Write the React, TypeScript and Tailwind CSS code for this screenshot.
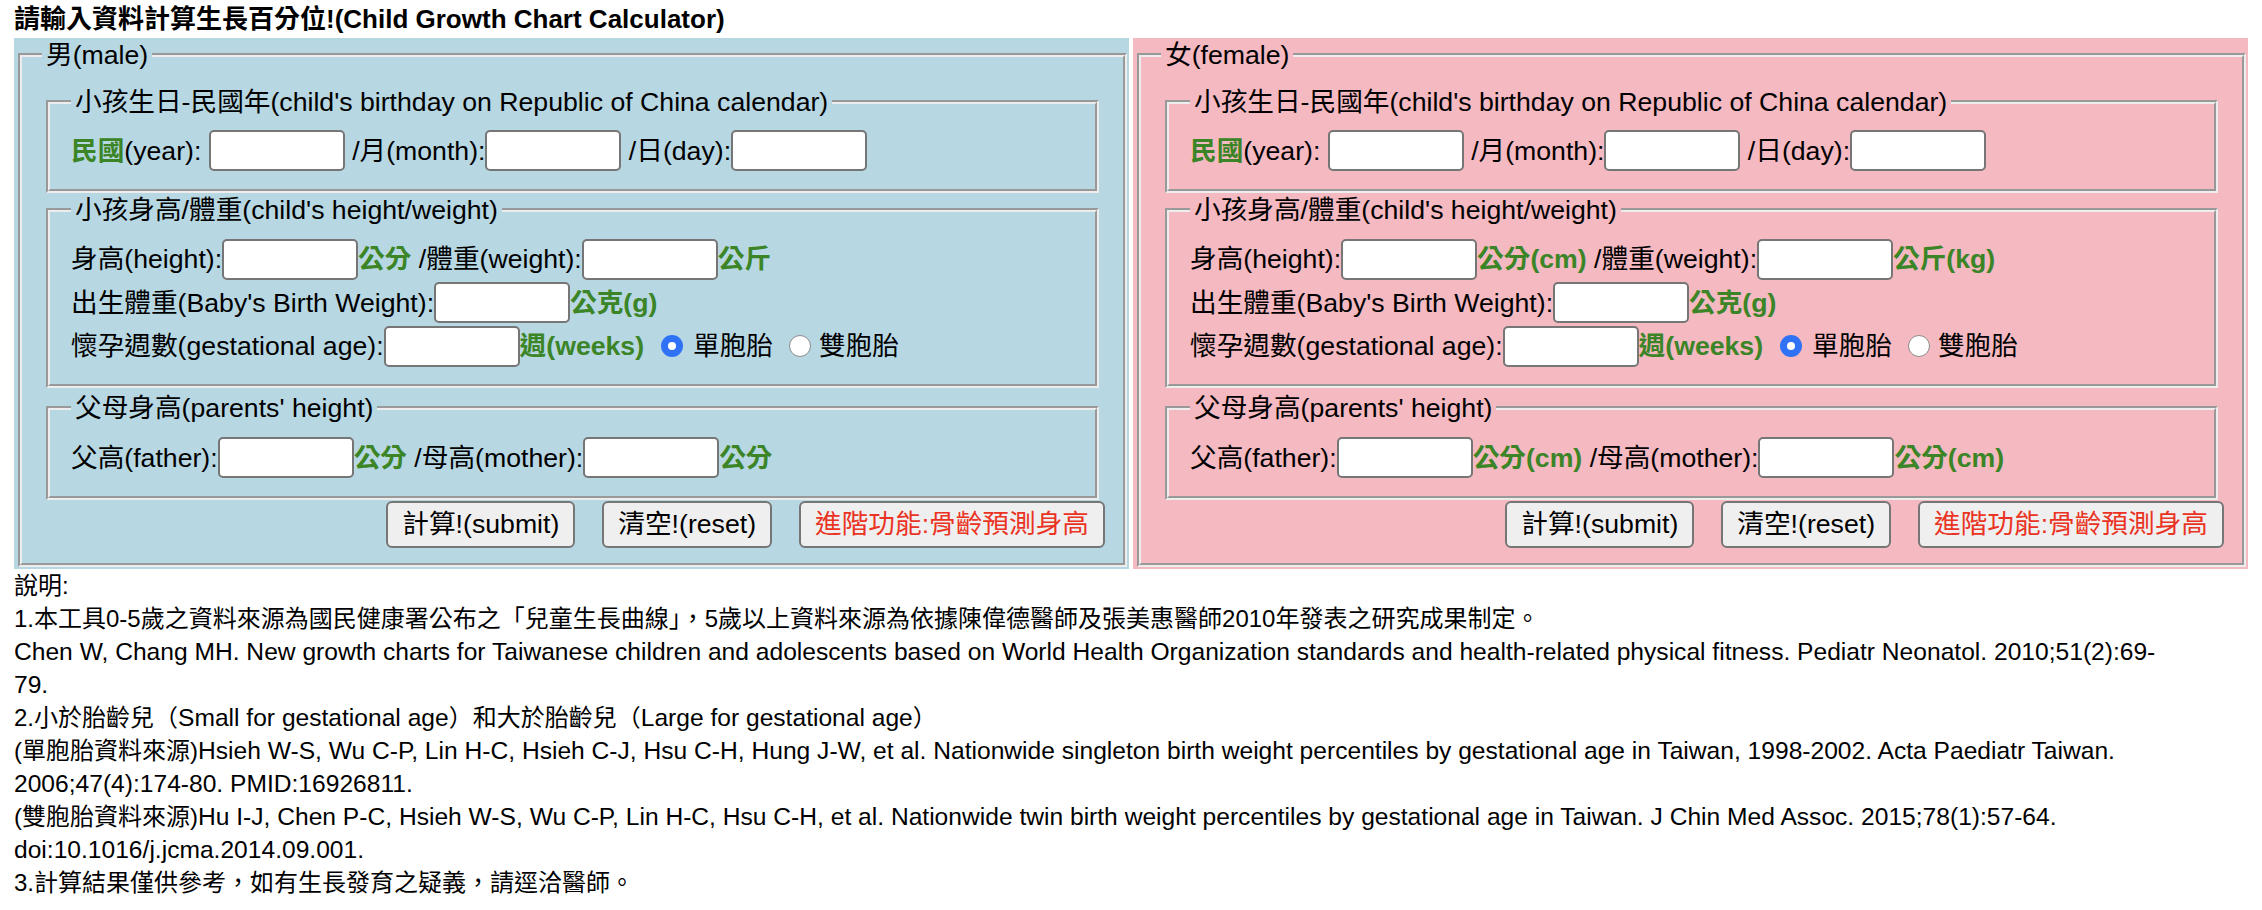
import React from "react";

const Input = () => (
  <span className="inline-block w-[136px] h-[41px] border-2 border-[#767676] rounded-[5px] bg-white shrink-0" />
);

const Unit = ({ children }: { children: React.ReactNode }) => (
  <span className="font-bold text-[#3b8527]">{children}</span>
);

const Row = ({ children }: { children: React.ReactNode }) => (
  <div className="flex items-center h-[43.5px] whitespace-pre">{children}</div>
);

const RadioOn = () => (
  <span className="flex items-center justify-center w-[22px] h-[22px] rounded-full bg-[#2f72f6] ml-[17px] mr-[10px] shrink-0">
    <span className="block w-[8px] h-[8px] rounded-full bg-white" />
  </span>
);

const RadioOff = () => (
  <span className="block w-[22px] h-[22px] rounded-full bg-white border-[1.5px] border-[#8c8c8c] ml-[16px] mr-[8px] shrink-0" />
);

const Fieldset = ({
  legend,
  className,
  children,
}: {
  legend: string;
  className: string;
  children: React.ReactNode;
}) => (
  <fieldset
    className={`min-w-0 border-4 [border-style:groove] border-[#ededed] ${className}`}
  >
    <legend className="px-[4px] leading-[34px]">{legend}</legend>
    {children}
  </fieldset>
);

const Btn = ({ children, red }: { children: React.ReactNode; red?: boolean }) => (
  <span
    className={`flex items-center h-[47px] px-[14px] bg-[#efefef] border-2 border-[#767676] rounded-[6px] ${
      red ? "text-[#ea3323]" : "text-black"
    }`}
  >
    {children}
  </span>
);

const L = ({ children }: { children: React.ReactNode }) => (
  <span className="text-[24.6px]">{children}</span>
);

const Panel = ({ sex, female }: { sex: string; female?: boolean }) => (
  <div className={`flex-1 min-w-0 pl-[4px] pr-[2px] pb-[2px] ${female ? "bg-[#f4b9c1]" : "bg-[#b7d7e3]"}`}>
    <Fieldset legend={sex} className="px-[20px] pt-[13px] pb-[15px]">
      <Fieldset
        legend="小孩生日-民國年(child's birthday on Republic of China calendar)"
        className="mx-[4px] px-[21px] pt-[10px] pb-[16px]"
      >
        <Row>
          <Unit>民國</Unit>
          <span>(year): </span>
          <Input />
          <span> /月(month):</span>
          <Input />
          <span> /日(day):</span>
          <Input />
        </Row>
      </Fieldset>
      <Fieldset
        legend="小孩身高/體重(child's height/weight)"
        className="mx-[4px] px-[21px] pt-[11px] pb-[16px]"
      >
        <Row>
          <span>身高(height):</span>
          <Input />
          <Unit>{female ? "公分(cm)" : "公分"}</Unit>
          <span> /體重(weight):</span>
          <Input />
          <Unit>{female ? "公斤(kg)" : "公斤"}</Unit>
        </Row>
        <Row>
          <span>出生體重(Baby's Birth Weight):</span>
          <Input />
          <Unit>公克(g)</Unit>
        </Row>
        <Row>
          <span>懷孕週數(gestational age):</span>
          <Input />
          <Unit>週(weeks)</Unit>
          <RadioOn />
          <span>單胞胎</span>
          <RadioOff />
          <span>雙胞胎</span>
        </Row>
      </Fieldset>
      <Fieldset
        legend="父母身高(parents' height)"
        className="mx-[4px] mt-[3px] px-[21px] pt-[11px] pb-[16px]"
      >
        <Row>
          <span>父高(father):</span>
          <Input />
          <Unit>{female ? "公分(cm)" : "公分"}</Unit>
          <span> /母高(mother):</span>
          <Input />
          <Unit>{female ? "公分(cm)" : "公分"}</Unit>
        </Row>
      </Fieldset>
      <div className="flex justify-end gap-[27px] mt-[1px] -mr-[2px]">
        <Btn>計算!(submit)</Btn>
        <Btn>清空!(reset)</Btn>
        <Btn red>進階功能:骨齡預測身高</Btn>
      </div>
    </Fieldset>
  </div>
);

export default function App() {
  return (
    <div className="w-[2262px] h-[910px] bg-white text-black font-['Liberation_Sans','Noto_Sans_CJK_TC',sans-serif] overflow-hidden">
      <div className="h-[38px] flex items-center px-[14px] text-[26px] font-bold">
        請輸入資料計算生長百分位!(Child Growth Chart Calculator)
      </div>
      <div className="flex gap-[4px] px-[14px] text-[26.67px]">
        <Panel sex="男(male)" />
        <Panel sex="女(female)" female />
      </div>
      <div className="px-[14px] text-[24px] leading-[33px] whitespace-nowrap">
        <div>說明:</div>
        <div>1.本工具0-5歲之資料來源為國民健康署公布之「兒童生長曲線」，5歲以上資料來源為依據陳偉德醫師及張美惠醫師2010年發表之研究成果制定。</div>
        <div>
          <L>Chen W, Chang MH. New growth charts for Taiwanese children and adolescents based on World Health Organization standards and health-related physical fitness. Pediatr Neonatol. 2010;51(2):69-</L>
        </div>
        <div>
          <L>79.</L>
        </div>
        <div>
          2.小於胎齡兒（<L>Small for gestational age</L>）和大於胎齡兒（<L>Large for gestational age</L>）
        </div>
        <div>
          (單胞胎資料來源)<L>Hsieh W-S, Wu C-P, Lin H-C, Hsieh C-J, Hsu C-H, Hung J-W, et al. Nationwide singleton birth weight percentiles by gestational age in Taiwan, 1998-2002. Acta Paediatr Taiwan.</L>
        </div>
        <div>
          <L>2006;47(4):174-80. PMID:16926811.</L>
        </div>
        <div>
          (雙胞胎資料來源)<L>Hu I-J, Chen P-C, Hsieh W-S, Wu C-P, Lin H-C, Hsu C-H, et al. Nationwide twin birth weight percentiles by gestational age in Taiwan. J Chin Med Assoc. 2015;78(1):57-64.</L>
        </div>
        <div>
          <L>doi:10.1016/j.jcma.2014.09.001.</L>
        </div>
        <div>3.計算結果僅供參考，如有生長發育之疑義，請逕洽醫師。</div>
      </div>
    </div>
  );
}
